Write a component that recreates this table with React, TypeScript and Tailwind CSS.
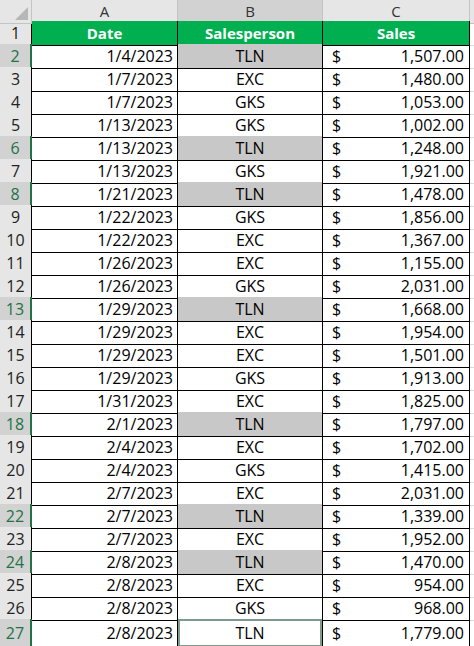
import React from "react";

type Row = { date: string; person: string; sales: string };

const rows: Row[] = [
  { date: "1/4/2023", person: "TLN", sales: "1,507.00" },
  { date: "1/7/2023", person: "EXC", sales: "1,480.00" },
  { date: "1/7/2023", person: "GKS", sales: "1,053.00" },
  { date: "1/13/2023", person: "GKS", sales: "1,002.00" },
  { date: "1/13/2023", person: "TLN", sales: "1,248.00" },
  { date: "1/13/2023", person: "GKS", sales: "1,921.00" },
  { date: "1/21/2023", person: "TLN", sales: "1,478.00" },
  { date: "1/22/2023", person: "GKS", sales: "1,856.00" },
  { date: "1/22/2023", person: "EXC", sales: "1,367.00" },
  { date: "1/26/2023", person: "EXC", sales: "1,155.00" },
  { date: "1/26/2023", person: "GKS", sales: "2,031.00" },
  { date: "1/29/2023", person: "TLN", sales: "1,668.00" },
  { date: "1/29/2023", person: "EXC", sales: "1,954.00" },
  { date: "1/29/2023", person: "EXC", sales: "1,501.00" },
  { date: "1/29/2023", person: "GKS", sales: "1,913.00" },
  { date: "1/31/2023", person: "EXC", sales: "1,825.00" },
  { date: "2/1/2023", person: "TLN", sales: "1,797.00" },
  { date: "2/4/2023", person: "EXC", sales: "1,702.00" },
  { date: "2/4/2023", person: "GKS", sales: "1,415.00" },
  { date: "2/7/2023", person: "EXC", sales: "2,031.00" },
  { date: "2/7/2023", person: "TLN", sales: "1,339.00" },
  { date: "2/7/2023", person: "EXC", sales: "1,952.00" },
  { date: "2/8/2023", person: "TLN", sales: "1,470.00" },
  { date: "2/8/2023", person: "EXC", sales: "954.00" },
  { date: "2/8/2023", person: "GKS", sales: "968.00" },
  { date: "2/8/2023", person: "TLN", sales: "1,779.00" },
];

const grid = "grid grid-cols-[32px_146px_145px_147px_1fr]";

export default function App() {
  return (
    <div
      className="w-[474px] h-[646px] overflow-hidden bg-white text-[16px] text-black"
      style={{ fontFamily: '"Open Sans", "Liberation Sans", sans-serif' }}
    >
      {/* column letters */}
      <div className={`${grid} h-[21px] text-[15px]`}>
        <div className="relative bg-[#e6e6e6] border-r border-b border-[#c4c4c4]">
          <svg className="absolute right-[3px] bottom-[3px]" width="13" height="13" viewBox="0 0 13 13">
            <polygon points="13,0 13,13 0,13" fill="#b7b7b7" />
          </svg>
        </div>
        <div className="flex items-center justify-center bg-[#e6e6e6] border-r border-b border-r-[#c4c4c4] border-b-black text-[#333]">
          A
        </div>
        <div className="flex items-center justify-center bg-[#d2d2d2] border-r border-b border-r-[#c4c4c4] border-b-black text-[#333]">
          B
        </div>
        <div className="flex items-center justify-center bg-[#e6e6e6] border-r border-b border-r-[#c4c4c4] border-b-black text-[#333]">
          C
        </div>
        <div className="bg-[#e6e6e6] border-b border-[#c4c4c4]" />
      </div>

      {/* header row */}
      <div className={`${grid} h-[23px]`}>
        <div className="flex items-center justify-center bg-[#e6e6e6] border-r border-b border-r-black border-b-[#c4c4c4] text-[#222]">
          1
        </div>
        <div className="flex items-center justify-center bg-[#00b050] border-r border-b border-black text-[15px] font-bold text-white">
          Date
        </div>
        <div className="flex items-center justify-center bg-[#00b050] border-r border-b border-black text-[15px] font-bold text-white">
          Salesperson
        </div>
        <div className="flex items-center justify-center bg-[#00b050] border-r border-b border-black text-[15px] font-bold text-white">
          Sales
        </div>
        <div className="border-b border-[#dadada]" />
      </div>

      {rows.map((r, i) => {
        const picked = r.person === "TLN";
        const active = i === rows.length - 1;
        return (
          <div key={i} className={`${grid} h-[23px]`}>
            <div
              className={
                picked
                  ? "flex items-center justify-center bg-[#d2d2d2] border-r-2 border-b border-r-[#217346] border-b-[#c4c4c4] text-[#217346]"
                  : "flex items-center justify-center bg-[#e6e6e6] border-r border-b border-r-black border-b-[#c4c4c4] text-[#222]"
              }
            >
              {i + 2}
            </div>
            <div className="flex items-center justify-end pr-[4px] border-r border-b border-black">
              {r.date}
            </div>
            <div
              className={`border-r border-b border-black ${picked && !active ? "bg-[#c8c8c8]" : ""}`}
            >
              {active ? (
                <div className="h-full flex items-center justify-center border-2 border-[#7d9a8b] bg-white">
                  {r.person}
                </div>
              ) : (
                <div className="h-full flex items-center justify-center">{r.person}</div>
              )}
            </div>
            <div className="flex items-center justify-between pl-[9px] pr-[5px] border-r border-b border-black">
              <span>$</span>
              <span>{r.sales}</span>
            </div>
            <div className="border-b border-[#dadada]" />
          </div>
        );
      })}
    </div>
  );
}
